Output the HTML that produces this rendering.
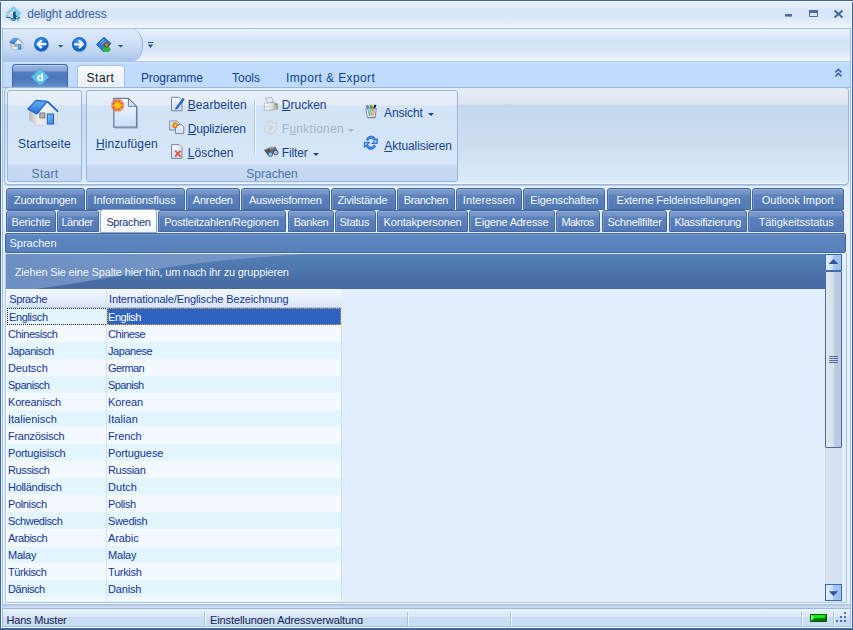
<!DOCTYPE html>
<html><head><meta charset="utf-8">
<style>
*{margin:0;padding:0;box-sizing:border-box}
html,body{width:853px;height:630px;overflow:hidden;background:#e6effa}
body{font-family:"Liberation Sans",sans-serif;font-size:12px;position:relative}
.a{position:absolute}
svg{position:absolute;overflow:visible}
#title{left:0;top:0;width:853px;height:29px;background:linear-gradient(#e7f0fb 0,#e3edfb 25%,#d6e5f9 35%,#d8e7fa 60%,#eaf2fd 90%,#f4f8fe 100%);border-bottom:1px solid #9fc0e8}
#ttext{left:27.2px;top:7px;font-size:12px;color:#3e5e9c;letter-spacing:-0.136px}
#qat{left:0;top:29px;width:853px;height:33px;background:linear-gradient(#eaf2fd 0,#e0ebfa 20%,#d3e3f8 35%,#d7e6f9 70%,#eaf2fd 92%,#f4f8fe 100%);border-bottom:1px solid #a9c8f0}
#qpill{left:3px;top:29px;width:140px;height:32px;border-radius:0 10px 10px 0/0 16px 16px 0;background:linear-gradient(#deeafa,#cfe0f6 45%,#bcd3f0 75%,#a9c5eb);border-right:1px solid #8fb3e0}
#tabsrow{left:0;top:62px;width:853px;height:26px;background:linear-gradient(#d0e2fb 0,#d0e2fb 1px,#bfdbff 2px);border-bottom:1px solid #8db2e3}
#appbtn{left:12px;top:64px;width:56px;height:24px;border-radius:4px 4px 0 0;background:linear-gradient(#9db5dd 0,#8aa6d6 25%,#587fbf 30%,#4c74b8 55%,#5a83c4 80%,#6f96d0 100%);border:1px solid #3d67ad;border-bottom:none;box-shadow:inset 0 1px 0 #b9cbe8}
#starttab{left:77px;top:65px;width:48px;height:24px;border:1px solid #a6c0e2;border-bottom:none;border-radius:4px 4px 0 0;background:linear-gradient(#f7faff,#e8eff9)}
.rt{color:#15428b;font-size:12px;top:70px}
#ribbon{left:4px;top:87px;width:845px;height:98px;border-radius:4px;background:linear-gradient(#e8edf4 0,#dfe6f0 16px,#c5d7ed 17px,#cbdcf1 50%,#dcebf9 100%);border:1px solid #9ab8de;box-shadow:inset 0 -1px 0 #eef6fd, 0 1px 1px rgba(120,150,190,.45)}
.grp{border:1px solid #97b6dc;border-radius:3px;background:linear-gradient(#e9f1fb 0,#e3ecf8 15%,#d3e3f7 17%,#d6e6f8 80%,#e0edfb 100%)}
.gl{position:absolute;left:0;right:0;bottom:0;height:16px;background:linear-gradient(#c7daf2,#c2d7f1);color:#4b73ab;font-size:12px;text-align:center;line-height:19px;border-radius:0 0 2px 2px}
.bt{color:#15428b;font-size:12px}
.dis{color:#a5b4c8}
.arr{width:0;height:0;border-left:3px solid transparent;border-right:3px solid transparent;border-top:3px solid #15428b}
u{text-decoration:underline;text-decoration-thickness:1px;text-underline-offset:1px}
.t{height:22px;border:1px solid #46699f;border-radius:3px 3px 0 0;background:linear-gradient(#9fb8de 0,#7d9bcb 1px,#7293c6 5px,#5d83bd 6px,#5a80bb 9px,#5279b4 100%);box-shadow:inset 1px 0 0 rgba(160,185,225,.35)}
.tt{height:22px;line-height:22px;font-size:11px;color:#f3f7fc;white-space:nowrap}
.tt.sl{color:#1b3b7d;top:211px!important}
.t.sel{background:linear-gradient(#ffffff,#f3f7fd);color:#1b3b7d;border-color:#8ea9cf;box-shadow:none}
#phdr{left:5px;top:233px;width:841px;height:20px;border:1px solid #3f639a;border-radius:2px;background:linear-gradient(#6088c1,#5b83be 30%,#5881bc);color:#f3f7fc;font-size:11px;line-height:18px;padding-left:3.5px;box-shadow:inset 0 1px 0 #7898c8}
#frame{left:5px;top:253px;width:842px;height:350px;border:1px solid #a9c6ea;border-top:none;background:#e2eefc;box-shadow:inset 1px 0 0 #fff, 0 1px 0 #fff}
#gpanel{left:6px;top:254px;width:836px;height:35px;background:#4f78b0;overflow:hidden}
#gtext{left:14.8px;top:266px;color:#f0f5fb;font-size:11px;letter-spacing:-0.168px}
#grid{left:7px;top:289px;width:335px;height:312px;background:#f3f9fe;border-right:1px solid #d0dff0}
.hd{top:290px;height:18px;padding-top:1px;background:linear-gradient(#f1f6fd,#e5eefa 60%,#d6e4f6);border-bottom:1px solid #b7cbe6;color:#12359a;font-size:11px;line-height:17px;padding-left:2px;letter-spacing:-0.15px}
.row{left:7px;width:334px;height:17px}
.c{position:absolute;top:0;height:17px;line-height:18px;color:#12359a;font-size:11px;letter-spacing:-0.15px;padding-left:1px}
.c1{left:0;width:99px}
.c2{left:100px;width:234px}
#vline{left:106px;top:290px;width:1px;height:311px;background:#d5e2f1}
#sb{left:825px;top:254px;width:17px;height:347px;background:linear-gradient(90deg,#c2cfe2 0,#d6e2f0 1px,#d6e2f0 100%)}
.sbb{left:825px;width:17px;height:17px;border:1px solid #2c70c2;background:linear-gradient(90deg,#e3edf9,#cddff4 45%,#a9c6ec 50%,#9fbde8)}
#status{left:0;top:608px;width:853px;height:20px;background:linear-gradient(#eef5fd 0,#e3edfa 2px,#dbe7f8 40%,#c9ddf5 45%,#c7dcf5 80%,#d3e4f8 100%);border-top:1px solid #97b7e2}
#fline{left:3px;top:604px;width:847px;height:4px;background:linear-gradient(#9ab8e0,#b9cde6 30%,#d5e1ef)}
.st{top:614px;height:10px;overflow:hidden;color:#14224e;font-size:11px;letter-spacing:-0.2px}
#lb{left:0;top:0;width:1px;height:630px;background:#3b64a0;box-shadow:1px 0 0 #f0f6fd}
#lb2{left:2px;top:28px;width:1px;height:600px;background:#a3c1e8}
#rb{left:852px;top:0;width:1px;height:630px;background:#3b64a0;box-shadow:-1px 0 0 #f0f6fd}
#rb2{left:850px;top:28px;width:1px;height:600px;background:#a3c1e8}
#tb{left:0;top:0;width:853px;height:1px;background:#3b64a0;box-shadow:0 1px 0 #f4f8fe}
#bb{left:0;top:628px;width:853px;height:2px;background:linear-gradient(#4a74ae,#335b94)}
#bb2{left:2px;top:626px;width:849px;height:1px;background:#a3c1e8;box-shadow:0 1px 0 #eef5fd}
</style></head><body>
<div id="title" class="a"></div>
<div id="ttext" class="a">delight address</div>
<div id="qat" class="a"></div>
<div id="qpill" class="a"></div>
<div id="tabsrow" class="a"></div>
<div id="appbtn" class="a"></div>
<div id="starttab" class="a"></div>
<div class="a rt" style="left:86.6px;top:71px;color:#1a1a1a;letter-spacing:0.5px">Start</div>
<div class="a rt" style="left:140.9px;top:71px;letter-spacing:-0.088px">Programme</div>
<div class="a rt" style="left:232.1px;top:71px;letter-spacing:-0.05px">Tools</div>
<div class="a rt" style="left:286.0px;top:71px;letter-spacing:0.386px">Import &amp; Export</div>
<div id="ribbon" class="a"></div>
<div class="a grp" style="left:7px;top:90px;width:75px;height:92px"><div class="gl" style="letter-spacing:0.3px;padding-left:1px">Start</div></div>
<div class="a grp" style="left:86px;top:90px;width:372px;height:92px"><div class="gl">Sprachen</div></div>
<div class="a bt" style="left:18.0px;top:136.5px;letter-spacing:0.222px">Startseite</div>
<div class="a bt" style="left:95.9px;top:136.5px;letter-spacing:0.111px"><u>H</u>inzufügen</div>
<div class="a bt" style="left:187.7px;top:98px;letter-spacing:0.111px"><u>B</u>earbeiten</div>
<div class="a bt" style="left:187.7px;top:122px;letter-spacing:-0.18px"><u>D</u>uplizieren</div>
<div class="a bt" style="left:187.7px;top:146px;letter-spacing:0.05px"><u>L</u>öschen</div>
<div class="a" style="left:254px;top:100px;width:1px;height:54px;background:#b3c9e6;box-shadow:1px 0 0 #f0f6fd"></div>
<div class="a bt" style="left:281.8px;top:98px"><u>D</u>rucken</div>
<div class="a bt dis" style="left:281.8px;top:122px;letter-spacing:0.278px">F<u>u</u>nktionen</div>
<div class="a arr" style="left:348px;top:129px;border-top-color:#a5b4c8"></div>
<div class="a bt" style="left:281.8px;top:146px;letter-spacing:-0.14px">Filter</div>
<div class="a arr" style="left:313px;top:153px"></div>
<div class="a bt" style="left:384.1px;top:106px;letter-spacing:-0.1px">Ansicht</div>
<div class="a arr" style="left:428px;top:113px"></div>
<div class="a bt" style="left:384.3px;top:138.5px;letter-spacing:-0.083px"><u>A</u>ktualisieren</div>

<!-- tabs -->
<div class="a t" style="left:6px;top:188px;width:79px"></div>
<div class="a tt" style="left:14.0px;top:189px;letter-spacing:-0.290px">Zuordnungen</div>
<div class="a t" style="left:86px;top:188px;width:99px"></div>
<div class="a tt" style="left:93.5px;top:189px;letter-spacing:-0.062px">Informationsfluss</div>
<div class="a t" style="left:186px;top:188px;width:54px"></div>
<div class="a tt" style="left:192.8px;top:189px;letter-spacing:-0.233px">Anreden</div>
<div class="a t" style="left:241px;top:188px;width:89px"></div>
<div class="a tt" style="left:248.9px;top:189px;letter-spacing:-0.192px">Ausweisformen</div>
<div class="a t" style="left:331px;top:188px;width:65px"></div>
<div class="a tt" style="left:337.6px;top:189px;letter-spacing:-0.260px">Zivilstände</div>
<div class="a t" style="left:397px;top:188px;width:58px"></div>
<div class="a tt" style="left:403.7px;top:189px;letter-spacing:-0.343px">Branchen</div>
<div class="a t" style="left:456px;top:188px;width:66px"></div>
<div class="a tt" style="left:462.8px;top:189px;letter-spacing:0.078px">Interessen</div>
<div class="a t" style="left:523px;top:188px;width:82px"></div>
<div class="a tt" style="left:530.3px;top:189px;letter-spacing:-0.167px">Eigenschaften</div>
<div class="a t" style="left:607px;top:188px;width:144px"></div>
<div class="a tt" style="left:616.5px;top:189px;letter-spacing:-0.137px">Externe Feldeinstellungen</div>
<div class="a t" style="left:752px;top:188px;width:92px"></div>
<div class="a tt" style="left:761.7px;top:189px;letter-spacing:0.008px">Outlook Import</div>
<div class="a t" style="left:6px;top:210px;width:50px"></div>
<div class="a tt" style="left:11.6px;top:211px;letter-spacing:-0.229px">Berichte</div>
<div class="a t" style="left:57px;top:210px;width:42px"></div>
<div class="a tt" style="left:61.5px;top:211px;letter-spacing:-0.500px">Länder</div>
<div class="a t sel" style="left:100px;top:209px;width:57px;height:24px"></div>
<div class="a tt sl" style="left:106.4px;top:211px;letter-spacing:-0.386px">Sprachen</div>
<div class="a t" style="left:158px;top:210px;width:128px"></div>
<div class="a tt" style="left:164.2px;top:211px;letter-spacing:-0.182px">Postleitzahlen/Regionen</div>
<div class="a t" style="left:288px;top:210px;width:46px"></div>
<div class="a tt" style="left:293.7px;top:211px;letter-spacing:-0.460px">Banken</div>
<div class="a t" style="left:335px;top:210px;width:41px"></div>
<div class="a tt" style="left:339.5px;top:211px;letter-spacing:-0.240px">Status</div>
<div class="a t" style="left:377px;top:210px;width:91px"></div>
<div class="a tt" style="left:383.5px;top:211px;letter-spacing:-0.146px">Kontakpersonen</div>
<div class="a t" style="left:469px;top:210px;width:86px"></div>
<div class="a tt" style="left:474.6px;top:211px;letter-spacing:-0.238px">Eigene Adresse</div>
<div class="a t" style="left:556px;top:210px;width:44px"></div>
<div class="a tt" style="left:561.4px;top:211px;letter-spacing:-0.660px">Makros</div>
<div class="a t" style="left:602px;top:210px;width:65px"></div>
<div class="a tt" style="left:607.4px;top:211px;letter-spacing:-0.200px">Schnellfilter</div>
<div class="a t" style="left:669px;top:210px;width:78px"></div>
<div class="a tt" style="left:674.5px;top:211px;letter-spacing:-0.286px">Klassifizierung</div>
<div class="a t" style="left:748px;top:210px;width:96px"></div>
<div class="a tt" style="left:758.7px;top:211px;letter-spacing:-0.093px">Tätigkeitsstatus</div>

<div id="phdr" class="a">Sprachen</div>
<div id="frame" class="a"></div>
<svg class="a" style="left:6px;top:254px" width="819" height="35" viewBox="0 0 819 35">
<defs>
<linearGradient id="gpD" x1="0" y1="0" x2="0" y2="1"><stop offset="0" stop-color="#5580b8"/><stop offset="1" stop-color="#4569a0"/></linearGradient>
<linearGradient id="gpL" x1="0" y1="0" x2="1" y2="0"><stop offset="0" stop-color="#6d8fc2"/><stop offset="1" stop-color="#7898c8"/></linearGradient>
</defs>
<rect width="819" height="35" fill="url(#gpD)"/>
<path d="M0 0 H300 Q200 6 140 17 Q80 28 30 35 H0 Z" fill="url(#gpL)"/>
</svg>
<div id="gtext" class="a">Ziehen Sie eine Spalte hier hin, um nach ihr zu gruppieren</div>
<div id="grid" class="a"></div>
<div class="a hd" style="left:7px;width:99px;letter-spacing:-0.433px;padding-left:2.3px">Sprache</div>
<div class="a hd" style="left:106px;width:236px;border-left:1px solid #c4d5ea;letter-spacing:-0.129px;padding-left:2px">Internationale/Englische Bezeichnung</div>
<div class="a row" style="top:308px;background:#e3f5fd"><div class="c c1" style="width:99px;border:1px dotted #222;border-right:none;line-height:16px;letter-spacing:-0.35px">Englisch</div><div class="c c2" style="background:#2d62c0;color:#fff;outline:1px dotted #e9a33c;outline-offset:-1px;letter-spacing:-0.45px">English</div></div>
<div class="a row" style="top:325px;background:#f3f9fe"><div class="c c1" style="letter-spacing:-0.428px">Chinesisch</div><div class="c c2" style="letter-spacing:-0.45px">Chinese</div></div>
<div class="a row" style="top:342px;background:#e3f5fd"><div class="c c1" style="letter-spacing:-0.425px">Japanisch</div><div class="c c2" style="letter-spacing:-0.436px">Japanese</div></div>
<div class="a row" style="top:359px;background:#f3f9fe"><div class="c c1" style="letter-spacing:-0.1px">Deutsch</div><div class="c c2" style="letter-spacing:-0.6px">German</div></div>
<div class="a row" style="top:376px;background:#e3f5fd"><div class="c c1" style="letter-spacing:-0.493px">Spanisch</div><div class="c c2" style="letter-spacing:-0.6px">Spanish</div></div>
<div class="a row" style="top:393px;background:#f3f9fe"><div class="c c1" style="letter-spacing:-0.206px">Koreanisch</div><div class="c c2" style="letter-spacing:-0.07px">Korean</div></div>
<div class="a row" style="top:410px;background:#e3f5fd"><div class="c c1" style="letter-spacing:0.0px">Italienisch</div><div class="c c2" style="letter-spacing:0.1px">Italian</div></div>
<div class="a row" style="top:427px;background:#f3f9fe"><div class="c c1" style="letter-spacing:-0.28px">Französisch</div><div class="c c2" style="letter-spacing:-0.11px">French</div></div>
<div class="a row" style="top:444px;background:#e3f5fd"><div class="c c1" style="letter-spacing:-0.205px">Portugisisch</div><div class="c c2" style="letter-spacing:-0.094px">Portuguese</div></div>
<div class="a row" style="top:461px;background:#f3f9fe"><div class="c c1" style="letter-spacing:-0.393px">Russisch</div><div class="c c2" style="letter-spacing:-0.333px">Russian</div></div>
<div class="a row" style="top:478px;background:#e3f5fd"><div class="c c1" style="letter-spacing:-0.3px">Holländisch</div><div class="c c2" style="letter-spacing:0.05px">Dutch</div></div>
<div class="a row" style="top:495px;background:#f3f9fe"><div class="c c1" style="letter-spacing:-0.35px">Polnisch</div><div class="c c2" style="letter-spacing:-0.35px">Polish</div></div>
<div class="a row" style="top:512px;background:#e3f5fd"><div class="c c1" style="letter-spacing:-0.439px">Schwedisch</div><div class="c c2" style="letter-spacing:-0.333px">Swedish</div></div>
<div class="a row" style="top:529px;background:#f3f9fe"><div class="c c1" style="letter-spacing:-0.464px">Arabisch</div><div class="c c2" style="letter-spacing:-0.11px">Arabic</div></div>
<div class="a row" style="top:546px;background:#e3f5fd"><div class="c c1" style="letter-spacing:-0.225px">Malay</div><div class="c c2" style="letter-spacing:-0.2px">Malay</div></div>
<div class="a row" style="top:563px;background:#f3f9fe"><div class="c c1" style="letter-spacing:-0.393px">Türkisch</div><div class="c c2" style="letter-spacing:-0.317px">Turkish</div></div>
<div class="a row" style="top:580px;background:#e3f5fd"><div class="c c1" style="letter-spacing:-0.417px">Dänisch</div><div class="c c2" style="letter-spacing:-0.15px">Danish</div></div>
<div id="vline" class="a"></div>
<div id="sb" class="a"></div>
<div class="a sbb" style="top:254px"></div>
<div class="a sbb" style="top:584px"></div>
<div class="a" style="left:825px;top:271px;width:17px;height:177px;border:1px solid #4a6a9e;border-radius:1px;background:linear-gradient(90deg,#e2e8f0,#d6dee9 50%,#bccbe0 52%,#b9c9df)"></div>
<svg class="a" style="left:0;top:0" width="853" height="630">
<path d="M828.7 264 H838.3 L833.5 259 Z" fill="#2a56a2"/>
<path d="M828.9 591.2 H838.1 L833.5 596 Z" fill="#2a56a2"/>
<path d="M829 356.5h9M829 358.5h9M829 360.5h9M829 362.5h9" stroke="#4a6ea8" stroke-width="1"/>
</svg>
<div id="fline" class="a"></div><div id="status" class="a"></div>
<div class="a" style="left:407px;top:612px;width:1px;height:15px;background:#a9c3e3;box-shadow:1px 0 0 #f2f7fd"></div><div class="a" style="left:510px;top:612px;width:1px;height:15px;background:#a9c3e3;box-shadow:1px 0 0 #f2f7fd"></div><div class="a" style="left:801px;top:612px;width:1px;height:15px;background:#a9c3e3;box-shadow:1px 0 0 #f2f7fd"></div><div class="a" style="left:833px;top:612px;width:1px;height:15px;background:#a9c3e3;box-shadow:1px 0 0 #f2f7fd"></div>
<div class="a st" style="left:6.6px;letter-spacing:-0.22px">Hans Muster</div>
<div class="a" style="left:204px;top:612px;width:1px;height:15px;background:#a9c3e3;box-shadow:1px 0 0 #f2f7fd"></div>
<div class="a st" style="left:209.9px;letter-spacing:-0.09px">Einstellungen Adressverwaltung</div>
<svg class="a" style="left:0;top:0" width="853" height="630" viewBox="0 0 853 630">
<defs>
<linearGradient id="gRoof" x1="0" y1="0" x2="0" y2="1"><stop offset="0" stop-color="#6fb2f2"/><stop offset="1" stop-color="#1f6fd6"/></linearGradient>
<linearGradient id="gWall" x1="0" y1="0" x2="1" y2="1"><stop offset="0" stop-color="#ffffff"/><stop offset="1" stop-color="#d9d9d9"/></linearGradient>
<linearGradient id="gSide" x1="0" y1="0" x2="1" y2="0"><stop offset="0" stop-color="#b8b8b8"/><stop offset="1" stop-color="#e6e6e6"/></linearGradient>
<linearGradient id="gDoor" x1="0" y1="0" x2="1" y2="1"><stop offset="0" stop-color="#7cc0fb"/><stop offset="1" stop-color="#2b82e6"/></linearGradient>
<radialGradient id="gCirc" cx="0.45" cy="0.35" r="0.7"><stop offset="0" stop-color="#4aa2f5"/><stop offset="0.7" stop-color="#1466cf"/><stop offset="1" stop-color="#0b4aa8"/></radialGradient>
<linearGradient id="gDoc" x1="0" y1="0" x2="0" y2="1"><stop offset="0" stop-color="#f4f8fe"/><stop offset="1" stop-color="#c9ddf6"/></linearGradient>
<radialGradient id="gBurst" cx="0.5" cy="0.5" r="0.5"><stop offset="0" stop-color="#ffd200"/><stop offset="0.35" stop-color="#ffb400"/><stop offset="0.55" stop-color="#f04a10"/><stop offset="1" stop-color="#f04a10" stop-opacity="0"/></radialGradient>
</defs>
<!-- title icon -->
<g>
<path d="M13.5 5.8 L21.3 13.5 L13.5 21.3 L5.7 13.5 Z" fill="#7fcbec"/>
<path d="M8.6 16.4 L18.4 16.4 L13.5 21.3 Z" fill="#cdeef9"/>
<path d="M12.8 10.4h2.2v2.2h-2.2zM10.2 12h3.8v1.3h-3.8z" fill="#ffffff"/>
<path d="M6.2 13.4 L13 13.3 L13 17.2 L8.6 17.4 Z" fill="#d8c8f6"/>
<circle cx="14.4" cy="12.8" r="1.5" fill="#0c5a7d"/>
<path d="M13 13.8 Q15.6 13.2 15.9 15 L16.2 15.8 L18.2 16.4 L16 17 L16.2 19.2 L13.4 19.2 Z" fill="#0c5a7d"/>
<path d="M6.2 15 L7.9 15.1 L8.9 17 L6.6 16.5Z" fill="#47e070"/>
<path d="M5.8 17 Q8 18.2 10 17.6 Q12 19.4 14.6 18.9 Q16.8 19.6 19.2 17.2" stroke="#0b5f86" stroke-width="1" fill="none"/>
<path d="M10.3 19.6 Q13 20.8 15.6 20.3 M19.8 16.8 L17.6 21" stroke="#1a79a6" stroke-width="0.9" fill="none"/>
</g>
<!-- window buttons -->
<rect x="785" y="14" width="7" height="2.6" fill="#4d6b9c"/>
<path d="M809.5 10.5h8v6h-8z" fill="none" stroke="#4d6b9c" stroke-width="1"/>
<rect x="809" y="10" width="9" height="3" fill="#4d6b9c"/>
<path d="M834.5 10.5 L842.5 17.5 M842.5 10.5 L834.5 17.5" stroke="#4d6b9c" stroke-width="2.2"/>
<!-- QAT home -->
<g transform="translate(9.5,34.5) scale(0.45)">
<path d="M0.5 17 L8.6 8 L19 9.3 L30 19.5 L29.5 31.5 L9.5 33 L1.5 27.5 Z" fill="#777" opacity="0.35" transform="translate(1,1)"/>
<path d="M1.5 17 L9.2 21.5 L9.5 33 L1.8 27.5 Z" fill="url(#gSide)"/>
<path d="M9.2 21.5 L19.4 9.5 L29.5 19.5 L29.2 31.7 L9.5 33 Z" fill="url(#gWall)"/>
<path d="M0 17 L8.6 8.2 L19.4 9.2 L9 21.6 Z" fill="url(#gRoof)" stroke="#1b66cc" stroke-width="1"/>
<path d="M19.4 9.2 L30.2 19.7" stroke="#1b66cc" stroke-width="1.6"/>
<rect x="11.4" y="21" width="5.3" height="5.4" fill="#aaa" stroke="#777" stroke-width="1"/>
<rect x="19" y="22" width="6.6" height="10.5" fill="url(#gDoor)" stroke="#1a64c8" stroke-width="1"/>
</g>
<!-- back -->
<circle cx="41.3" cy="44.2" r="7.2" fill="url(#gCirc)"/>
<circle cx="41.8" cy="44.8" r="7.2" fill="none" stroke="#0a3f7a" stroke-opacity="0.25" stroke-width="0.8"/>
<path d="M45.5 44.2 H38.2 M41 41 L37.6 44.2 L41 47.4" stroke="#fff" stroke-width="2.2" fill="none" stroke-linecap="round" stroke-linejoin="round"/>
<path d="M58 45 h5.5 l-2.75 2.5z" fill="#2b4f8e"/>
<!-- forward -->
<circle cx="79.2" cy="44.3" r="7.2" fill="url(#gCirc)"/>
<circle cx="79.7" cy="44.9" r="7.2" fill="none" stroke="#0a3f7a" stroke-opacity="0.25" stroke-width="0.8"/>
<path d="M75 44.3 H82.3 M79.5 41.1 L82.9 44.3 L79.5 47.5" stroke="#fff" stroke-width="2.2" fill="none" stroke-linecap="round" stroke-linejoin="round"/>
<!-- book person -->
<path d="M96.5 44.5 L104 37.2 L111 43.5 L103.5 51.8 Z" fill="#2a7ad8" stroke="#1556a8" stroke-width="0.8"/>
<path d="M100 43 L104 39.5 M101.5 44.5 L105.5 41" stroke="#8fc3f5" stroke-width="0.9"/>
<ellipse cx="106.5" cy="49.2" rx="4" ry="2.8" fill="#31b24a"/>
<circle cx="106.5" cy="44.8" r="2.3" fill="#c77a18" stroke="#3b2a10" stroke-width="0.6"/>
<path d="M117.8 45 h5.5 l-2.75 2.5z" fill="#2b4f8e"/>
<!-- customize -->
<rect x="147.8" y="42" width="5.4" height="1" fill="#2b4f8e"/>
<path d="M147.8 44.6 h5.4 l-2.7 3.5z" fill="#2b4f8e"/>
<!-- app diamond -->
<path d="M40.1 68.3 L49 77 L40.1 85.7 L31.2 77 Z" fill="#5cc2ec" stroke="#3aa2d8" stroke-width="0.8"/>
<text x="40.2" y="80.8" font-family="Liberation Sans" font-weight="bold" font-size="11" fill="#fff" text-anchor="middle">d</text>
<!-- collapse chevrons -->
<path d="M835.4 72.4 L838.4 69.5 L841.5 72.4 M835.4 76.3 L838.4 73.4 L841.5 76.3" stroke="#3a67a9" stroke-width="1.7" fill="none"/>
<!-- big house -->
<g transform="translate(27,91.5)">
<path d="M1.5 17 L8.6 8 L19 9.3 L30 19.5 L29.5 31.5 L9.5 33 L1.5 27.5 Z" fill="#555" opacity="0.3" transform="translate(1,1.2)"/>
<path d="M1.8 17.5 L9.5 22 L10 34 L2.5 28.5 Z" fill="url(#gSide)"/>
<path d="M9.5 22 L20.3 10 L30.8 20 L30.4 32.4 L10 34 Z" fill="url(#gWall)"/>
<path d="M0.8 17.6 L9.2 8.8 L20.3 9.8 L9.8 22.6 Z" fill="url(#gRoof)" stroke="#1865d2" stroke-width="1.2" stroke-linejoin="round"/>
<path d="M20.3 9.8 L31 20.2" stroke="#1865d2" stroke-width="1.8"/>
<rect x="12.8" y="21.5" width="5" height="5" fill="#b5b5b5" stroke="#7a7a7a" stroke-width="1"/>
<rect x="20.3" y="22.5" width="6.3" height="10" fill="url(#gDoor)" stroke="#1a63cf" stroke-width="1"/>
</g>
<!-- big new doc -->
<path d="M114.5 98.8 H128.4 L136.6 107 V127.4 H114.5 Z" fill="none" stroke="#8a93a8" stroke-width="1" transform="translate(1,1)" opacity="0.5"/>
<path d="M113.8 98.4 H128.4 L136.6 106.4 V127.2 H113.8 Z" fill="url(#gDoc)" stroke="#6d7b9a" stroke-width="1.3"/>
<path d="M128.4 98.4 V106.4 H136.6 Z" fill="#cfe3f7" stroke="#6d7b9a" stroke-width="1"/>
<circle cx="117.7" cy="105.3" r="7.5" fill="url(#gBurst)"/>
<path d="M117.7 99 L118.3 103.5 L122 100.5 L119.5 104.5 L124 105.3 L119.5 106.2 L122.5 110 L118.3 107 L117.7 112 L117 107 L113 110 L116 106.2 L111.5 105.3 L116 104.5 L113.2 100.5 L117 103.5Z" fill="#ffe36b" opacity="0.9"/>
<circle cx="117.7" cy="105.3" r="2.6" fill="#ffc600"/>
<!-- small docs -->
<g>
<path d="M171.5 97.3 H179 L182 100.3 V110.8 H171.5 Z" fill="url(#gDoc)" stroke="#7a88a6" stroke-width="1"/>
<path d="M176 107.5 L182.8 98.2 L184.3 99.5 L177.5 108.6 L175.6 109.3 Z" fill="#2f6fd0" stroke="#1b4d9c" stroke-width="0.6"/>
</g>
<g>
<path d="M169.7 121 H177 L179.5 123.5 V130 H169.7 Z" fill="url(#gDoc)" stroke="#7a88a6" stroke-width="1"/>
<path d="M175.5 124.7 H181.5 L183.8 127 V133.6 H175.5 Z" fill="url(#gDoc)" stroke="#7a88a6" stroke-width="1"/>
<circle cx="175" cy="125.3" r="3.6" fill="url(#gBurst)"/>
<circle cx="175" cy="125.3" r="1.5" fill="#ffcc00"/>
</g>
<g>
<path d="M171.5 144.6 H179 L182 147.6 V158.4 H171.5 Z" fill="url(#gDoc)" stroke="#7a88a6" stroke-width="1"/>
<path d="M175.2 150.6 L180.6 156.6 M180.6 150.6 L175.2 156.6" stroke="#e0584a" stroke-width="2"/>
</g>
<!-- printer -->
<defs><linearGradient id="gPr" x1="0" y1="0" x2="1" y2="0"><stop offset="0" stop-color="#ffffff"/><stop offset="0.5" stop-color="#e4e4e4"/><stop offset="1" stop-color="#9a9a9a"/></linearGradient></defs>
<path d="M265.3 98.2 L271.5 97.3 L273.3 101.5 L268 103.3 Z" fill="#dff0ff" stroke="#8a96a8" stroke-width="0.6"/>
<path d="M264.4 103.3 L274 102.3 L277.8 104 V109.2 L268 110.6 L264.4 109.5 Z" fill="url(#gPr)" stroke="#9a9a9a" stroke-width="0.6"/>
<path d="M265 107 L270 106.5" stroke="#c0c0c0" stroke-width="0.8"/>
<ellipse cx="276" cy="104.5" rx="1.1" ry="0.8" fill="#2fc12f"/>
<!-- gear disabled -->
<g transform="translate(270.8,127.5)">
<path d="M-1.2 -6.5 H1.2 L1.6 -4.5 L3.3 -3.7 L5 -4.9 L6.5 -3.3 L5.3 -1.6 L6 0 V0 L6.5 1.2 L4.6 1.8 L3.9 3.4 L5 5 L3.5 6.4 L1.9 5.3 L1.2 6.5 H-1.2 L-1.6 4.5 L-3.3 3.7 L-5 4.9 L-6.5 3.3 L-5.3 1.6 L-6.5 1.2 V-1.2 L-4.6 -1.8 L-3.9 -3.4 L-5 -5 L-3.5 -6.4 L-1.9 -5.3 Z" fill="#dde3ea" stroke="#c3ccd8" stroke-width="0.9"/>
<circle r="1.8" fill="#cfd9e6" stroke="#c3ccd8" stroke-width="0.8"/>
</g>
<!-- binoculars -->
<g>
<path d="M264 150 L269 147.2 L272.5 153 L268.5 156 Z" fill="#555"/>
<path d="M269.5 147 L275.5 146.8 L278.2 152.5 L272.5 153.5 Z" fill="#666"/>
<path d="M265.5 149.5 L268.8 147.8" stroke="#ddd" stroke-width="0.8"/>
<path d="M270 148 L274.5 147.8" stroke="#ddd" stroke-width="0.8"/>
<circle cx="270.3" cy="154.2" r="2.3" fill="#8cc4f8" stroke="#333" stroke-width="0.7"/>
<circle cx="275.8" cy="152.6" r="2.3" fill="#8cc4f8" stroke="#333" stroke-width="0.7"/>
</g>
<!-- pencil cup -->
<g>
<path d="M367.2 105.5 L370.2 116" stroke="#0f3c9c" stroke-width="2"/>
<path d="M367.5 106 L369.5 113" stroke="#7fb0ee" stroke-width="0.8"/>
<path d="M371.2 105 L371.2 116" stroke="#33b52a" stroke-width="2.8"/>
<path d="M371.2 103.8 L371.2 105.5" stroke="#e8c49a" stroke-width="1.8"/>
<path d="M375.5 104.8 L373 111" stroke="#111" stroke-width="2"/>
<path d="M374.5 109 L372.8 116.5" stroke="#f06a30" stroke-width="2"/>
<path d="M365.8 108.3 H376.3 L375.2 117.5 H367.3 Z" fill="#ffffff" fill-opacity="0.45" stroke="#8c84c2" stroke-width="1"/>
<path d="M367.5 117.8 H375.5" stroke="#6a6aa0" stroke-width="1" opacity="0.6"/>
</g>
<!-- refresh -->
<g stroke="#1a5fc8" stroke-width="0.8" stroke-linejoin="round" fill="#3d8deb">
<path d="M366.2 139.8 Q367.5 136 371.5 136 Q374.5 136 375.6 139.5 L373.8 140.2 Q373 138.3 371.3 138.2 Q369 138.3 368.3 140.3 Z"/>
<path d="M377.3 138.4 V143.6 H371.6 Z"/>
<path d="M375.6 146 Q374.6 149.4 370.6 149.4 Q367.4 149.3 366.5 146 L368.3 145.4 Q369 147.1 370.8 147.2 Q373 147.1 373.8 145.2 Z"/>
<path d="M364.3 142.3 V147.6 H364.3 L369.9 142.3 Z"/>
</g>
<path d="M365.2 143.3 L367.5 143.3 L365.2 145.5Z M376.3 139.5 L376.3 142.6 L373.6 142.6Z" fill="#b9dcff"/>
<!-- status green -->
<rect x="810.5" y="614.5" width="16" height="7" fill="#007800" stroke="#005a00" stroke-width="1"/>
<path d="M811 615 H826 L824.5 618 H813.5 Z" fill="#10f010"/>
<path d="M811 615 L814 618.2 L811 621Z" fill="#60ff60"/>
<path d="M811.3 615.3 L813.5 617.8" stroke="#e8ffe8" stroke-width="0.8"/>
<!-- grip -->
<g fill="#4a72b2">
<rect x="844" y="612" width="2" height="2"/>
<rect x="840" y="616" width="2" height="2"/><rect x="844" y="616" width="2" height="2"/>
<rect x="836" y="620" width="2" height="2"/><rect x="840" y="620" width="2" height="2"/><rect x="844" y="620" width="2" height="2"/>
</g>
</svg>

<div id="lb2" class="a"></div><div id="rb2" class="a"></div><div id="bb2" class="a"></div><div id="lb" class="a"></div><div id="rb" class="a"></div><div id="tb" class="a"></div><div id="bb" class="a"></div>
</body></html>
